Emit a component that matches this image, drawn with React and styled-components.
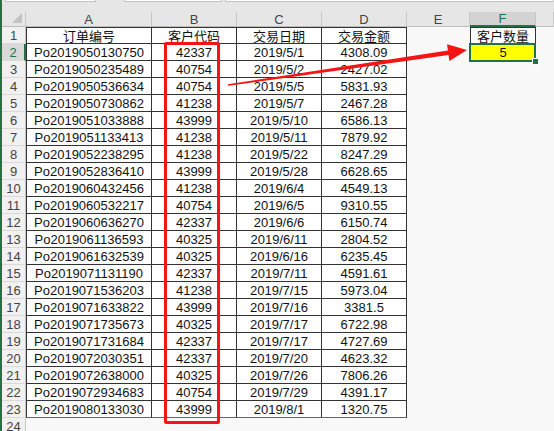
import React from 'react'
import styled, { createGlobalStyle } from 'styled-components'

const GlobalStyle = createGlobalStyle`
  body {
    margin: 0;
    background: #f8f8f8;
  }
`

const Page = styled.div`
  position: relative;
  width: 554px;
  height: 431px;
  overflow: hidden;
  box-sizing: border-box;
  border-left: 2px solid #217346;
  background: #f8f8f8;
  font-family: 'Liberation Sans', 'Noto Sans CJK SC', sans-serif;
`

const TopStrip = styled.div`
  height: 12px;
  display: flex;
  background: #e6e6e6;
`

const BarBox = styled.div`
  height: 1px;
  margin-left: ${(p) => p.$gap}px;
  width: ${(p) => (p.$w ? p.$w + 'px' : 'auto')};
  flex: ${(p) => (p.$w ? 'none' : '1')};
  background: #fff;
  border: 1px solid #c4c4c4;
  border-top: none;
`

const Sheet = styled.div`
  display: grid;
  grid-template-columns: 24px 126px 85px 85px 85px 63px 66px 1fr;
  grid-template-rows: 15px;
  grid-auto-rows: 17px;
`

const Corner = styled.div`
  display: flex;
  align-items: flex-end;
  justify-content: flex-end;
  padding: 0 3px 3px 0;
  background: #e6e6e6;
  border-right: 1px solid #c6c6c6;
  border-bottom: 1px solid #bdbdbd;
  box-sizing: border-box;
`

const CornerMark = styled.div`
  width: 0;
  height: 0;
  border-left: 10px solid transparent;
  border-bottom: 10px solid #c2c2c2;
`

const ColHeader = styled.div`
  display: flex;
  align-items: center;
  justify-content: center;
  box-sizing: border-box;
  font-size: 13px;
  color: ${(p) => (p.$active ? '#217346' : '#444')};
  background: ${(p) => (p.$active ? '#d3d3d3' : '#e6e6e6')};
  border-right: 1px solid #c6c6c6;
  border-bottom: ${(p) => (p.$active ? '2px solid #217346' : '1px solid #bdbdbd')};
`

const RowHeader = styled.div`
  display: flex;
  align-items: center;
  justify-content: center;
  box-sizing: border-box;
  font-size: 13px;
  color: ${(p) => (p.$active ? '#217346' : '#444')};
  background: ${(p) => (p.$active ? '#d9d9d9' : '#f1f1f1')};
  border-right: ${(p) => (p.$active ? '2px solid #217346' : '1px solid #c6c6c6')};
  border-bottom: 1px solid #dadada;
`

const Cell = styled.div`
  display: flex;
  align-items: center;
  justify-content: center;
  box-sizing: border-box;
  font-size: 13px;
  color: #111;
  white-space: nowrap;
  background: ${(p) => (p.$boxed ? '#fff' : 'transparent')};
  border-right: ${(p) => (p.$boxed ? '1px solid #333' : 'none')};
  border-bottom: ${(p) => (p.$boxed ? `1px solid ${p.$last ? '#666' : '#333'}` : 'none')};
  border-top: ${(p) => (p.$top ? '1px solid #333' : 'none')};
  border-left: ${(p) => (p.$left ? '1px solid #333' : 'none')};
`

const ActiveCell = styled.div`
  position: relative;
  display: flex;
  align-items: center;
  justify-content: center;
  font-size: 13px;
  color: #111;
  background: #ffff00;

  &::after {
    content: '';
    position: absolute;
    left: -1px;
    top: -1px;
    right: 0;
    bottom: -1px;
    border: 2px solid #217346;
  }

  &::before {
    content: '';
    position: absolute;
    right: -3px;
    bottom: -4px;
    width: 5px;
    height: 5px;
    background: #217346;
    border: 1px solid #fff;
    z-index: 2;
  }
`

const RedFrame = styled.div`
  position: absolute;
  left: 162px;
  top: 42px;
  width: 56px;
  height: 382px;
  box-sizing: border-box;
  border: 3px solid #f41414;
  border-radius: 2px;
  pointer-events: none;
`

const ArrowLayer = styled.svg`
  position: absolute;
  left: -2px;
  top: 0;
  width: 554px;
  height: 431px;
  pointer-events: none;
`

const rows = [
  ['Po2019050130750', '42337', '2019/5/1', '4308.09'],
  ['Po2019050235489', '40754', '2019/5/2', '2427.02'],
  ['Po2019050536634', '40754', '2019/5/5', '5831.93'],
  ['Po2019050730862', '41238', '2019/5/7', '2467.28'],
  ['Po2019051033888', '43999', '2019/5/10', '6586.13'],
  ['Po2019051133413', '41238', '2019/5/11', '7879.92'],
  ['Po2019052238295', '41238', '2019/5/22', '8247.29'],
  ['Po2019052836410', '43999', '2019/5/28', '6628.65'],
  ['Po2019060432456', '41238', '2019/6/4', '4549.13'],
  ['Po2019060532217', '40754', '2019/6/5', '9310.55'],
  ['Po2019060636270', '42337', '2019/6/6', '6150.74'],
  ['Po2019061136593', '40325', '2019/6/11', '2804.52'],
  ['Po2019061632539', '40325', '2019/6/16', '6235.45'],
  ['Po2019071131190', '42337', '2019/7/11', '4591.61'],
  ['Po2019071536203', '41238', '2019/7/15', '5973.04'],
  ['Po2019071633822', '43999', '2019/7/16', '3381.5'],
  ['Po2019071735673', '40325', '2019/7/17', '6722.98'],
  ['Po2019071731684', '42337', '2019/7/17', '4727.69'],
  ['Po2019072030351', '42337', '2019/7/20', '4623.32'],
  ['Po2019072638000', '40325', '2019/7/26', '7806.26'],
  ['Po2019072934683', '40754', '2019/7/29', '4391.17'],
  ['Po2019080133030', '43999', '2019/8/1', '1320.75'],
]

const letters = ['A', 'B', 'C', 'D', 'E', 'F', '']

export default function App() {
  return (
    <Page>
      <GlobalStyle />
      <TopStrip>
        <BarBox $gap={3} $w={89} />
        <BarBox $gap={28} $w={96} />
        <BarBox $gap={3} />
      </TopStrip>
      <Sheet>
        <Corner>
          <CornerMark />
        </Corner>
        {letters.map((l, i) => (
          <ColHeader key={i} $active={l === 'F'}>
            {l}
          </ColHeader>
        ))}

        {/* row 1: headings */}
        <RowHeader>1</RowHeader>
        <Cell $boxed $top $left>订单编号</Cell>
        <Cell $boxed $top>客户代码</Cell>
        <Cell $boxed $top>交易日期</Cell>
        <Cell $boxed $top>交易金额</Cell>
        <Cell />
        <Cell $boxed $top $left>客户数量</Cell>
        <Cell />

        {rows.map((r, i) => (
          <React.Fragment key={i}>
            <RowHeader $active={i === 0}>{i + 2}</RowHeader>
            {r.map((v, j) => (
              <Cell key={j} $boxed $left={j === 0} $last={i === rows.length - 1}>
                {v}
              </Cell>
            ))}
            <Cell />
            {i === 0 ? <ActiveCell>5</ActiveCell> : <Cell />}
            <Cell />
          </React.Fragment>
        ))}

        <RowHeader>24</RowHeader>
      </Sheet>

      <RedFrame />
      <ArrowLayer viewBox='0 0 554 431'>
        <polygon
          fill='#f41414'
          points='227.9,84.2 447.9,50.5 447,44.3 467,50 449.4,61.1 448.5,54.9 228.1,85.8'
        />
      </ArrowLayer>
    </Page>
  )
}
